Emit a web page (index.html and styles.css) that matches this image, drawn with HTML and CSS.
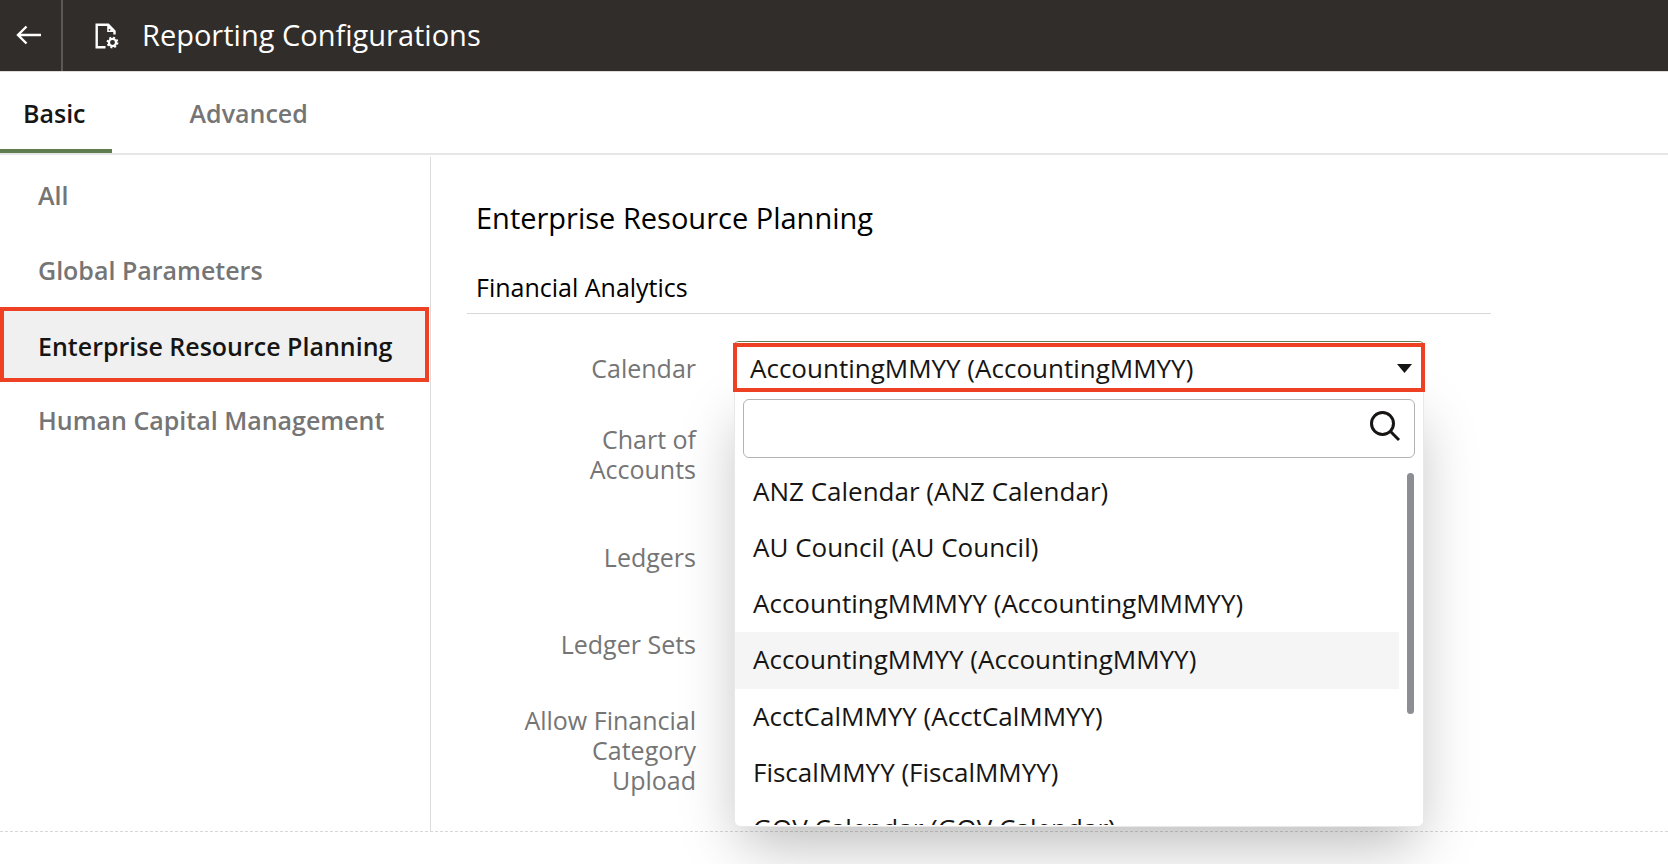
FILE: index.html
```html
<!DOCTYPE html>
<html lang="en">
<head>
<meta charset="utf-8">
<title>Reporting Configurations</title>
<link rel="stylesheet" href="styles.css">
</head>
<body>
<header class="topbar">
  <button class="back" type="button" aria-label="Back">
    <svg width="26" height="20" viewBox="0 0 26 20" fill="none" stroke="#fff" stroke-width="2.4"><path d="M1.800 10H25M10.500 1.500L2 10l8.500 8.500"/></svg>
  </button>
  <svg class="doc-icon" width="24" height="26" viewBox="0 0 24 26" fill="none" stroke="#fff">
    <path d="M10.500 24.200H1.700V1.800H13.200L19.500 8.300V11.500" stroke-width="2.400"/>
    <path d="M12.200 1.500V9h7.500z" fill="#fff" stroke="none"/>
    <circle cx="14.500" cy="6.800" r="0.900" fill="#312d2a" stroke="none"/>
    <circle cx="17.500" cy="19.500" r="3.600" stroke-width="2.300"/>
    <circle cx="17.500" cy="19.500" r="5" stroke-width="1.800" stroke-dasharray="1.960 1.967"/>
  </svg>
  <h1 class="title">Reporting Configurations</h1>
</header>
<nav class="tabs">
  <a class="tab tab-active" href="#basic">Basic</a>
  <a class="tab" href="#advanced">Advanced</a>
</nav>
<div class="body">
  <nav class="sidebar">
    <a class="side-item" href="#all">All</a>
    <a class="side-item" href="#global">Global Parameters</a>
    <a class="side-item side-active" href="#erp">Enterprise Resource Planning</a>
    <a class="side-item" href="#hcm">Human Capital Management</a>
  </nav>
  <main class="content">
    <h2 class="heading">Enterprise Resource Planning</h2>
    <h3 class="subheading">Financial Analytics</h3>
    <div class="form">
      <label class="label" for="calendar">Calendar</label>
      <div class="field">
        <div class="combo">
          <select class="select" id="calendar"><option>AccountingMMYY (AccountingMMYY)</option></select>
          <svg class="caret" width="15" height="9" viewBox="0 0 15 9"><path d="M0 0h15L7.500 9z" fill="#161513"/></svg>
        </div>
        <div class="menu">
          <div class="search">
            <input class="search-input" type="text" aria-label="Search calendars">
            <svg class="search-icon" width="32" height="32" viewBox="0 0 32 32" fill="none" stroke="#161513" stroke-width="3"><circle cx="13.500" cy="13.500" r="11"/><path d="M21.300 21.300L30 30"/></svg>
          </div>
          <ul class="options" role="listbox" aria-label="Calendars">
            <li class="option" role="option">ANZ Calendar (ANZ Calendar)</li>
            <li class="option" role="option">AU Council (AU Council)</li>
            <li class="option" role="option">AccountingMMMYY (AccountingMMMYY)</li>
            <li class="option option-active" role="option" aria-selected="true">AccountingMMYY (AccountingMMYY)</li>
            <li class="option" role="option">AcctCalMMYY (AcctCalMMYY)</li>
            <li class="option" role="option">FiscalMMYY (FiscalMMYY)</li>
            <li class="option" role="option">GOV Calendar (GOV Calendar)</li>
          </ul>
          <div class="thumb"></div>
        </div>
      </div>
      <span class="label label-chart">Chart of Accounts</span>
      <span class="label label-ledgers">Ledgers</span>
      <span class="label label-sets">Ledger Sets</span>
      <span class="label label-upload">Allow Financial Category Upload</span>
    </div>
  </main>
</div>
</body>
</html>
```
FILE: styles.css
```css
* { box-sizing: border-box; }
body {
  margin: 0;
  min-height: 100vh;
  display: flex;
  flex-direction: column;
  padding-bottom: 32px;
  background: #fff;
  color: #161513;
  font: 400 25px/30px "Open Sans", "Noto Sans", sans-serif;
  overflow: hidden;
}
h1, h2, h3 { margin: 0; font-weight: 400; }
a { text-decoration: none; }
.topbar {
  display: flex;
  align-items: center;
  height: 72px;
  background: #312d2a;
  border-bottom: 1px solid #dedcda;
  color: #fff;
}
.back {
  display: flex;
  align-items: center;
  align-self: stretch;
  width: 63px;
  padding: 0 0 2px 16px;
  border: 0;
  border-right: 2px solid #5b5956;
  background: none;
}
.doc-icon { margin: 0 23px 0 32px; }
.title { padding-bottom: 2px; font-size: 29px; }
.tabs {
  display: flex;
  height: 83px;
  gap: 54px;
  border-bottom: 2px solid #e6e6e6;
}
.tab {
  display: flex;
  align-items: center;
  padding: 4px 24px 0;
  border-bottom: 4px solid transparent;
  color: #757575;
  font-weight: 600;
}
.tab-active {
  padding: 4px 26px 0 23px;
  border-color: #5f7d4f;
  color: #161513;
}
.body {
  flex: 1;
  display: flex;
  border-bottom: 1px dashed #d8d8d8;
}
.sidebar {
  flex: none;
  width: 431px;
  margin-top: 2px;
  border-right: 1px solid #dcdcdc;
}
.side-item {
  display: flex;
  align-items: center;
  height: 75px;
  padding: 1px 0 0 38px;
  color: #757575;
  font-weight: 600;
  white-space: nowrap;
}
.side-active {
  margin-right: 1px;
  padding: 3px 0 0 34px;
  border: 4px solid #ee4023;
  background: #f0f0f0;
  color: #161513;
}
.content {
  flex: 1;
  max-width: 1060px;
  padding: 47px 0 0 36px;
}
.heading {
  padding-left: 9px;
  font-size: 29px;
  line-height: 32px;
  color: #000;
}
.subheading {
  margin-top: 31px;
  padding: 7px 9px 11px;
  border-bottom: 1px solid #d8d8d8;
  font-size: 25px;
  color: #000;
}
.form {
  display: grid;
  grid-template-columns: 229px 1fr;
  column-gap: 37px;
  margin-top: 27px;
}
.label {
  grid-column: 1;
  justify-self: end;
  max-width: 190px;
  text-align: right;
  color: #757575;
}
.form > label { padding-top: 12px; }
.field {
  position: relative;
  grid-column: 2;
  height: 51px;
  margin-right: 66px;
  z-index: 1;
}
.combo {
  position: relative;
  z-index: 2;
  padding-top: 1px;
  border-top: 1px solid #5f7d4f;
  border-radius: 6px 6px 0 0;
}
.select {
  display: block;
  width: 100%;
  height: 49px;
  padding: 0 13px;
  border: 4px solid #ee4023;
  border-radius: 0;
  background: #fff;
  color: #161513;
  font: inherit;
  font-size: 26px;
  line-height: 40px;
  appearance: none;
}
.caret {
  position: absolute;
  right: 13px;
  top: 22px;
  pointer-events: none;
}
.menu {
  position: absolute;
  z-index: 1;
  top: 49px;
  left: 1px;
  right: 1px;
  height: 437px;
  padding-top: 9px;
  border: 1px solid #e8e8e8;
  border-top: 0;
  border-radius: 0 0 6px 6px;
  background: #fff;
  box-shadow: 0 24px 56px -8px rgba(0, 0, 0, .28);
}
.search { position: relative; margin: 0 8px; }
.search-input {
  display: block;
  width: 100%;
  height: 59px;
  padding: 0 60px 0 12px;
  border: 1px solid #b3b3b3;
  border-radius: 6px;
  background: #fff;
  font: inherit;
}
.search-icon { position: absolute; right: 14px; top: 11px; }
.options {
  height: 367px;
  margin: 0;
  padding: 6px 24px 0 0;
  overflow: hidden;
  list-style: none;
  font-size: 26px;
}
.option {
  height: 56px;
  padding: 12px 18px;
  white-space: nowrap;
}
.option-active { height: 57px; background: #f5f5f5; }
.thumb {
  position: absolute;
  top: 83px;
  right: 9px;
  width: 7px;
  height: 241px;
  border-radius: 4px;
  background: #8b8e93;
}
.label-chart { margin-top: 32px; }
.label-ledgers { margin-top: 58px; }
.label-sets { margin-top: 57px; }
.label-upload { margin-top: 46px; }
```
